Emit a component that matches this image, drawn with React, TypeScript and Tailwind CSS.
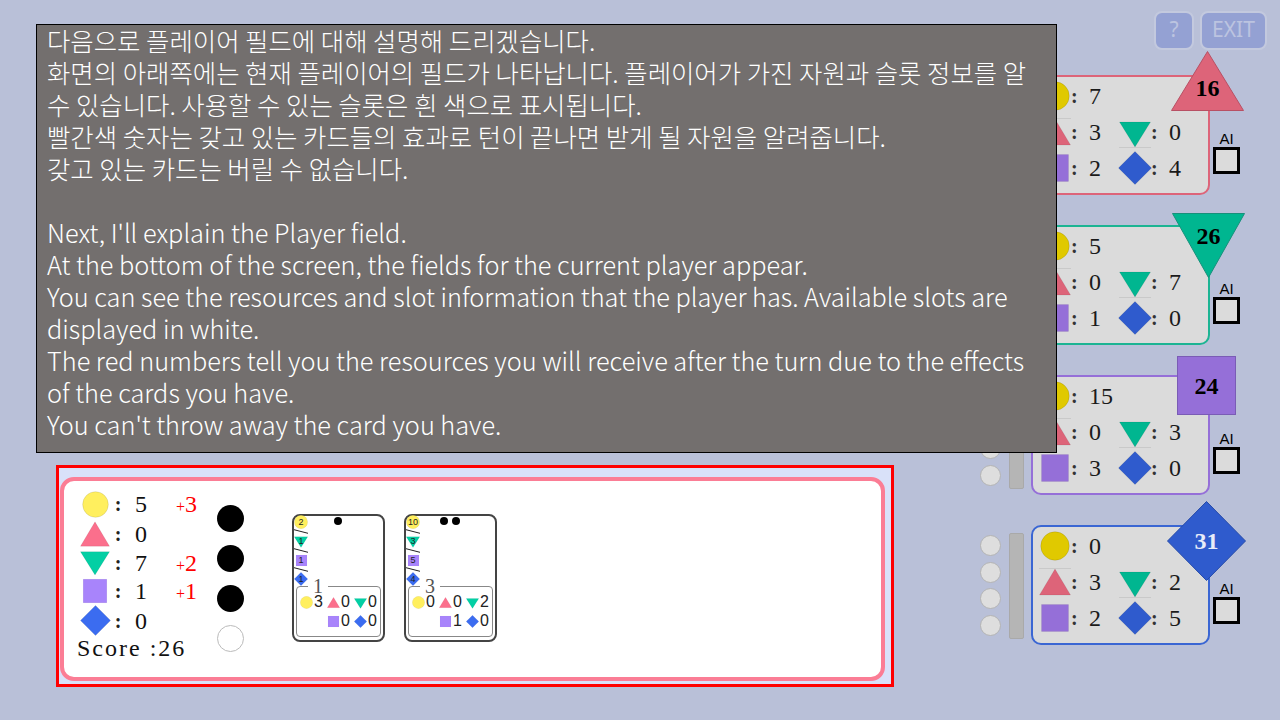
import React from "react";

type Kind = "circle" | "up" | "down" | "square" | "diamond";

const SERIF = "font-['Liberation_Serif',serif]";

const board: Record<Kind, string> = {
  circle: "#e0c900",
  up: "#dd6479",
  down: "#00b690",
  square: "#956fd8",
  diamond: "#2f5bcd",
};

const bright: Record<Kind, string> = {
  circle: "#ffef5e",
  up: "#fb6f8c",
  down: "#03cfa4",
  square: "#a884fb",
  diamond: "#3b6cf0",
};

function Shape({ kind, color, size, guide, className }: { kind: Kind; color: string; size: number; guide?: boolean; className?: string }) {
  return (
    <svg viewBox="0 0 32 32" width={size} height={size} className={className}>
      {kind === "circle" && <circle cx="16" cy="16" r="15.2" fill={color} stroke="#000" strokeOpacity="0.15" strokeWidth="0.8" />}
      {kind === "up" && <polygon points="16,3 31.5,29 0.5,29" fill={color} stroke="#000" strokeOpacity="0.12" strokeWidth="0.6" />}
      {kind === "down" && <polygon points="0.5,6 31.5,6 16,31" fill={color} stroke="#000" strokeOpacity="0.12" strokeWidth="0.6" />}
      {kind === "square" && <rect x="2.5" y="2.5" width="27" height="27" fill={color} stroke="#000" strokeOpacity="0.08" strokeWidth="0.6" />}
      {kind === "diamond" && <polygon points="16,0.5 31.5,16 16,31.5 0.5,16" fill={color} stroke="#000" strokeOpacity="0.15" strokeWidth="0.6" />}
      {guide && kind === "up" && <line x1="0" y1="2.5" x2="32" y2="2.5" stroke="#c9c9c9" strokeWidth="1" />}
      {guide && kind === "down" && <line x1="0" y1="31.5" x2="32" y2="31.5" stroke="#c9c9c9" strokeWidth="1" />}
    </svg>
  );
}

function Stat({ kind, value }: { kind: Kind; value: number }) {
  return (
    <div className="flex h-[36px] items-center">
      <div className="flex w-[34px] justify-center">
        <Shape kind={kind} color={board[kind]} size={kind === "diamond" ? 34 : kind === "circle" ? 30 : 32} guide />
      </div>
      <span className={`${SERIF} -ml-[1px] w-[6px] text-center text-[20px] font-bold leading-none text-[#333]`}>:</span>
      <span className={`${SERIF} ml-[12px] text-[24px] leading-none text-[#1a1a1a]`}>{value}</span>
    </div>
  );
}

function Badge({ kind, value }: { kind: Kind; value: number }) {
  if (kind === "up") {
    return (
      <div className="absolute left-[138px] top-[-26px] h-[60px] w-[73px]">
        <svg viewBox="0 0 73 60" className="absolute inset-0 h-full w-full">
          <polygon points="36.5,0.5 72.5,59.5 0.5,59.5" fill="#dd6479" stroke="#b85064" />
        </svg>
        <span className={`${SERIF} relative flex h-full items-end justify-center pb-[9px] text-[24px] font-bold leading-[28px] text-black`}>{value}</span>
      </div>
    );
  }
  if (kind === "down") {
    return (
      <div className="absolute left-[139px] top-[-14px] h-[65px] w-[73px]">
        <svg viewBox="0 0 73 65" className="absolute inset-0 h-full w-full">
          <polygon points="0.5,0.5 72.5,0.5 36.5,64.5" fill="#00b690" stroke="#17907b" />
        </svg>
        <span className={`${SERIF} relative flex h-full items-start justify-center pt-[9px] text-[24px] font-bold leading-[28px] text-black`}>{value}</span>
      </div>
    );
  }
  if (kind === "square") {
    return (
      <div className={`${SERIF} absolute left-[144px] top-[-21px] flex h-[59px] w-[59px] items-center justify-center border border-[#7a5cb5] bg-[#956fd8] text-[24px] font-bold text-black`}>
        {value}
      </div>
    );
  }
  return (
    <div className="absolute left-[134px] top-[-26px] h-[80px] w-[79px]">
      <svg viewBox="0 0 79 80" className="absolute inset-0 h-full w-full">
        <polygon points="39.5,0.5 78.5,40 39.5,79.5 0.5,40" fill="#2f5bcd" stroke="#254aa8" />
      </svg>
      <span className={`${SERIF} relative flex h-full items-center justify-center text-[24px] font-bold text-[#e8ecf8]`}>{value}</span>
    </div>
  );
}

const players: { kind: Kind; border: string; vals: number[]; score: number }[] = [
  { kind: "up", border: "border-[#dd6479]", vals: [7, 3, 0, 2, 4], score: 16 },
  { kind: "down", border: "border-[#1cb493]", vals: [5, 0, 7, 1, 0], score: 26 },
  { kind: "square", border: "border-[#956fd8]", vals: [15, 0, 3, 3, 0], score: 24 },
  { kind: "diamond", border: "border-[#3a66d3]", vals: [0, 3, 2, 2, 5], score: 31 },
];

function PlayerRow({ p }: { p: (typeof players)[number] }) {
  return (
    <div className="flex h-[120px] items-start">
      <div className="mt-[10px] flex w-[21px] flex-col gap-[5.6px]">
        {[0, 1, 2, 3].map((i) => (
          <div key={i} className="h-[21px] w-[21px] rounded-full border border-[#b4b4b4] bg-[#dedede]" />
        ))}
      </div>
      <div className="ml-[8px] mt-[8px] h-[106px] w-[15px] rounded-[2px] border border-[#a9a9a9] bg-[#b5b5b5]" />
      <div className={`relative ml-[7px] h-[120px] w-[179px] rounded-[10px] border-2 ${p.border} bg-[#dbdbdb] pl-[5px] pt-[1px]`}>
        <Stat kind="circle" value={p.vals[0]} />
        <div className="grid grid-cols-[80px_80px]">
          <Stat kind="up" value={p.vals[1]} />
          <Stat kind="down" value={p.vals[2]} />
          <Stat kind="square" value={p.vals[3]} />
          <Stat kind="diamond" value={p.vals[4]} />
        </div>
        <Badge kind={p.kind} value={p.score} />
      </div>
      <div className="ml-[3px] mt-[56px] flex w-[27px] flex-col items-center">
        <span className="font-['Liberation_Sans',sans-serif] text-[15px] leading-[16px] text-black">AI</span>
        <div className="h-[27px] w-[27px] border-[3px] border-black bg-[#dbdbdb]" />
      </div>
    </div>
  );
}

const myStats: { kind: Kind; value: number; bonus?: number; h: string; size: number }[] = [
  { kind: "circle", value: 5, bonus: 3, h: "h-[30px]", size: 27 },
  { kind: "up", value: 0, h: "h-[30px]", size: 30 },
  { kind: "down", value: 7, bonus: 2, h: "h-[28px]", size: 30 },
  { kind: "square", value: 1, bonus: 1, h: "h-[28px]", size: 28 },
  { kind: "diamond", value: 0, h: "h-[31px]", size: 31 },
];

function Slash() {
  return (
    <svg viewBox="0 0 14 5" width={14} height={5} className="block">
      <line x1="0" y1="0.7" x2="14" y2="4.3" stroke="#222" strokeWidth="1" />
    </svg>
  );
}

function Mini({ kind, label, size }: { kind: Kind; label: string; size: number }) {
  return (
    <div className="relative flex h-[14px] w-[14px] items-center justify-center">
      <Shape kind={kind} color={bright[kind]} size={size} className="absolute" />
      <span className="relative font-['Liberation_Sans',sans-serif] text-[9px] leading-none text-[#222]">{label}</span>
    </div>
  );
}

function CostCell({ kind, value }: { kind: Kind; value: number }) {
  return (
    <div className="flex w-[27px] items-center">
      <div className="flex w-[14px] justify-center">
        <Shape kind={kind} color={bright[kind]} size={13} />
      </div>
      <span className="ml-[1px] font-['Liberation_Sans',sans-serif] text-[16px] leading-none text-[#222]">{value}</span>
    </div>
  );
}

function Card({ cost, dots, req, pts, gain }: { cost: string; dots: number; req: string[]; pts: number; gain: number[] }) {
  return (
    <div className="flex h-[128px] w-[93px] flex-col rounded-[8px] border-2 border-[#444] bg-white">
      <div className="flex h-[70px]">
        <div className="-mt-px flex w-[14px] flex-col items-center">
          <Mini kind="circle" label={cost} size={14} />
          <Slash />
          <Mini kind="down" label={req[0]} size={14} />
          <Slash />
          <Mini kind="square" label={req[1]} size={13} />
          <Slash />
          <Mini kind="diamond" label={req[2]} size={14} />
        </div>
        <div className="flex flex-1 justify-center gap-[4px] pr-[15px] pt-[1px]">
          {Array.from({ length: dots }).map((_, i) => (
            <div key={i} className="h-[8px] w-[8px] rounded-full bg-black" />
          ))}
        </div>
      </div>
      <div className="relative ml-[2px] h-[51px] w-[85px] rounded-[4px] border border-[#888]">
        <span className={`${SERIF} absolute left-[11px] top-[-8px] w-[20px] bg-white text-center text-[20px] leading-[14px] text-[#555]`}>{pts}</span>
        <div className="flex h-[23px] items-end pl-[2px]">
          <CostCell kind="circle" value={gain[0]} />
          <CostCell kind="up" value={gain[1]} />
          <CostCell kind="down" value={gain[2]} />
        </div>
        <div className="flex h-[19px] items-end pl-[29px]">
          <CostCell kind="square" value={gain[3]} />
          <CostCell kind="diamond" value={gain[4]} />
        </div>
      </div>
    </div>
  );
}

function PlayerField() {
  return (
    <div className="h-[222px] w-[838px] border-[3px] border-[#ff0000] bg-[#d9e1f9] pl-px pt-[9px]">
      <div className="flex h-[204px] w-[825px] items-start rounded-[14px] border-4 border-[#fb7d95] bg-white pl-[15px]">
        <div className="mt-[8px] w-[118px]">
          {myStats.map((s) => (
            <div key={s.kind} className={`flex items-center ${s.h}`}>
              <div className={`flex w-[32px] justify-center ${s.kind === "down" ? "-translate-y-[2px]" : ""}`}>
                <Shape kind={s.kind} color={bright[s.kind]} size={s.size} />
              </div>
              <span className={`${SERIF} w-[14px] text-center text-[20px] font-bold leading-none text-[#222]`}>:</span>
              <span className={`${SERIF} ml-[10px] text-[24px] leading-none text-[#111]`}>{s.value}</span>
              {s.bonus !== undefined && (
                <span className={`${SERIF} ml-auto text-[24px] leading-none text-[#ff0000]`}>
                  <span className="text-[16px]">+</span>
                  {s.bonus}
                </span>
              )}
            </div>
          ))}
          <div className={`${SERIF} -ml-[2px] mt-[-2px] whitespace-nowrap text-[24px] leading-[28px] tracking-[2px] text-[#111]`}>Score :26</div>
        </div>
        <div className="ml-[20px] mt-[24px] flex flex-col gap-[13px]">
          <div className="h-[27px] w-[27px] rounded-full bg-black" />
          <div className="h-[27px] w-[27px] rounded-full bg-black" />
          <div className="h-[27px] w-[27px] rounded-full bg-black" />
          <div className="h-[27px] w-[27px] rounded-full border border-[#bbb] bg-white" />
        </div>
        <div className="ml-[48px] mt-[33px] flex gap-[19px]">
          <Card cost="2" dots={1} req={["1", "1", "1"]} pts={1} gain={[3, 0, 0, 0, 0]} />
          <Card cost="10" dots={2} req={["3", "5", "4"]} pts={3} gain={[0, 0, 2, 1, 0]} />
        </div>
      </div>
    </div>
  );
}

const korean = [
  "다음으로 플레이어 필드에 대해 설명해 드리겠습니다.",
  "화면의 아래쪽에는 현재 플레이어의 필드가 나타납니다. 플레이어가 가진 자원과 슬롯 정보를 알 수 있습니다. 사용할 수 있는 슬롯은 흰 색으로 표시됩니다.",
  "빨간색 숫자는 갖고 있는 카드들의 효과로 턴이 끝나면 받게 될 자원을 알려줍니다.",
  "갖고 있는 카드는 버릴 수 없습니다.",
];

const english = [
  "Next, I'll explain the Player field.",
  "At the bottom of the screen, the fields for the current player appear.",
  "You can see the resources and slot information that the player has. Available slots are displayed in white.",
  "The red numbers tell you the resources you will receive after the turn due to the effects of the cards you have.",
  "You can't throw away the card you have.",
];

export default function App() {
  return (
    <div className="relative flex h-[720px] w-[1280px] overflow-hidden bg-[#b9c0d8]">
      <div className="pl-[56px] pt-[465px]">
        <PlayerField />
      </div>

      <div className="ml-[86px] flex w-[287px] flex-col pt-[11px]">
        <div className="flex justify-end gap-[6px] font-['Noto_Sans',sans-serif] text-[21px] leading-none text-[#bcc4e0]">
          <button className="flex h-[39px] w-[40px] items-center justify-center rounded-[8px] border-2 border-[#c3c9de] bg-[#94a1d3] pb-[2px]">?</button>
          <button className="flex h-[39px] w-[67px] items-center justify-center rounded-[8px] border-2 border-[#c3c9de] bg-[#94a1d3] pb-[2px]">EXIT</button>
        </div>
        <div className="mt-[25px] flex flex-col gap-[30px]">
          {players.map((p) => (
            <PlayerRow key={p.score} p={p} />
          ))}
        </div>
      </div>

      <div className="absolute left-[36px] top-[24px] h-[429px] w-[1021px] border border-black bg-[#736f6e] pl-[10px] pr-[20px] font-['Noto_Sans_CJK_KR',sans-serif] font-light leading-[32px] text-white">
        <div className="-mt-px">
          <div className="text-[25.4px]">
            {korean.map((t) => (
              <div key={t}>{t}</div>
            ))}
          </div>
          <div className="h-[32px]" />
          <div className="text-[25.3px]">
            {english.map((t) => (
              <div key={t}>{t}</div>
            ))}
          </div>
        </div>
      </div>
    </div>
  );
}
